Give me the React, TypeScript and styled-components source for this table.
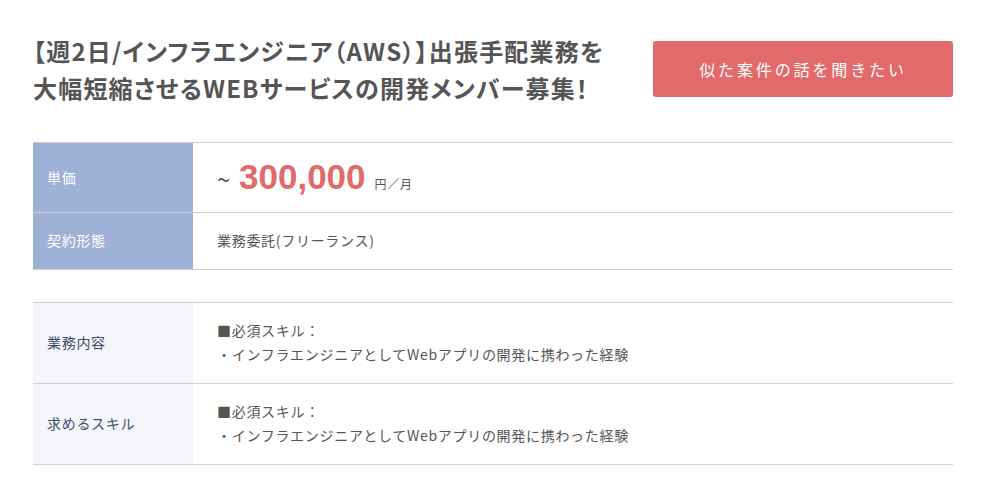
import React from "react";
import styled, { createGlobalStyle } from "styled-components";

const GlobalStyle = createGlobalStyle`
  html, body {
    margin: 0;
    padding: 0;
    background: #ffffff;
  }
  body {
    font-family: "Noto Sans CJK JP", "Noto Sans", sans-serif;
    color: #555555;
  }
`;

const Page = styled.div`
  width: 920px;
  padding: 32px 38px 27px 33px;
  display: flex;
  flex-direction: column;
`;

const Header = styled.header`
  display: flex;
  align-items: center;
  justify-content: space-between;
  margin-bottom: 36px;
`;

const Title = styled.h1`
  margin: 0;
  font-size: 24px;
  line-height: 37px;
  font-weight: 700;
  color: #555555;
  letter-spacing: 0.05em;
  font-feature-settings: "palt";
`;

const CtaButton = styled.button`
  flex: 0 0 auto;
  width: 300px;
  height: 56px;
  border: none;
  border-radius: 3px;
  background: #e36a6a;
  color: #ffffff;
  font-family: "Noto Sans CJK JP", sans-serif;
  font-size: 16px;
  letter-spacing: 0.18em;
  cursor: pointer;
`;

const Table = styled.dl<{ $gapAfter?: number }>`
  margin: 0 0 ${(p) => p.$gapAfter ?? 0}px;
  border-bottom: 1px solid #cfcfcf;
`;

const Row = styled.div`
  display: grid;
  grid-template-columns: 160px 1fr;
  border-top: 1px solid #cfcfcf;
`;

const Label = styled.dt<{ $variant: "strong" | "soft" }>`
  margin: 0;
  display: flex;
  align-items: center;
  padding: 0 14px 2px;
  font-size: 14px;
  letter-spacing: 0.05em;
  background: ${(p) => (p.$variant === "strong" ? "#9eb1d7" : "#f3f5fa")};
  color: ${(p) => (p.$variant === "strong" ? "#ffffff" : "#3e4d6e")};
`;

const Value = styled.dd`
  margin: 0;
  padding: 15px 24px 17px;
  font-size: 14px;
  line-height: 24px;
  letter-spacing: 0.05em;
  color: #555555;
`;

const Price = styled.div`
  display: flex;
  align-items: baseline;
  height: 37px;
`;

const Tilde = styled.span`
  font-size: 24px;
  color: #555555;
  margin-right: 8px;
`;

const Amount = styled.span`
  font-family: "Liberation Sans", Arial, sans-serif;
  font-weight: 700;
  font-size: 35px;
  line-height: 37px;
  color: #e06b6b;
  letter-spacing: 0;
  margin-right: 9px;
`;

const Unit = styled.span`
  font-size: 12px;
  color: #555555;
`;

const Line = styled.div``;

const rows2 = ["業務内容", "求めるスキル"];

export default function App() {
  return (
    <>
      <GlobalStyle />
      <Page>
        <Header>
          <Title>
            【週2日/インフラエンジニア（AWS）】出張手配業務を
            <br />
            大幅短縮させるWEBサービスの開発メンバー募集！
          </Title>
          <CtaButton>似た案件の話を聞きたい</CtaButton>
        </Header>

        <Table $gapAfter={32}>
          <Row>
            <Label $variant="strong">単価</Label>
            <Value>
              <Price>
                <Tilde>~</Tilde>
                <Amount>300,000</Amount>
                <Unit>円／月</Unit>
              </Price>
            </Value>
          </Row>
          <Row>
            <Label $variant="strong">契約形態</Label>
            <Value>業務委託(フリーランス)</Value>
          </Row>
        </Table>

        <Table>
          {rows2.map((label) => (
            <Row key={label}>
              <Label $variant="soft">{label}</Label>
              <Value>
                <Line>■必須スキル：</Line>
                <Line>・インフラエンジニアとしてWebアプリの開発に携わった経験</Line>
              </Value>
            </Row>
          ))}
        </Table>
      </Page>
    </>
  );
}
